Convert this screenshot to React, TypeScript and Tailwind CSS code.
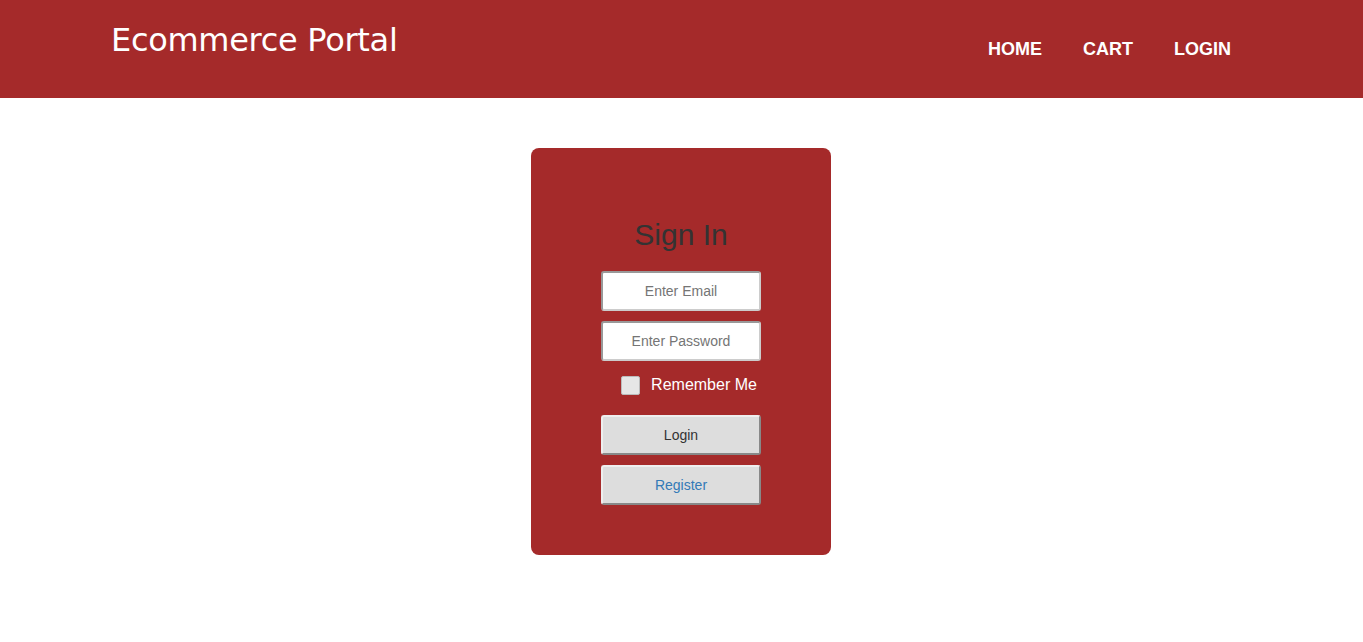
import React from "react";

export default function App() {
  return (
    <div className="min-h-[642px] bg-white" style={{ fontFamily: '"Liberation Sans", Arial, sans-serif' }}>
      <header className="h-[98px] bg-[#a52a2a] flex items-start justify-between pl-[111px] pr-[132px]">
        <h1 className="mt-[18px] text-[32px] leading-[44px] text-white font-normal tracking-[-0.3px]" style={{ fontFamily: '"DejaVu Sans", Tahoma, sans-serif' }}>
          Ecommerce Portal
        </h1>
        <nav className="mt-[39px] flex gap-[41px] text-white font-bold text-[18px] leading-[20px]">
          <span>HOME</span>
          <span>CART</span>
          <span>LOGIN</span>
        </nav>
      </header>
      <div className="flex justify-center pt-[50px] pr-[1px]">
        <div className="w-[300px] h-[407px] bg-[#a52a2a] rounded-[8px] flex flex-col items-center pt-[69px]">
          <h2 className="text-[30px] leading-[36px] text-[#333] mb-[18px]">Sign In</h2>
          <input
            className="w-[160px] h-[40px] bg-white border-2 border-[#999] border-b-[#ccc] border-r-[#ccc] rounded-[3px] text-center text-[14px] placeholder:text-[#757575] outline-none"
            placeholder="Enter Email"
          />
          <input
            className="mt-[10px] w-[160px] h-[40px] bg-white border-2 border-[#999] border-b-[#ccc] border-r-[#ccc] rounded-[3px] text-center text-[14px] placeholder:text-[#757575] outline-none"
            placeholder="Enter Password"
            type="password"
          />
          <label className="mt-[14px] flex items-center gap-[11px] text-white text-[16px] leading-[20px] ml-[16px]">
            <span className="w-[19px] h-[19px] bg-[#e6e6e6] border border-[#bbb] rounded-[2px] inline-block" />
            <span>Remember Me</span>
          </label>
          <button className="mt-[20px] w-[160px] h-[40px] bg-[#dddddd] border-2 border-[#eee] border-b-[#888] border-r-[#888] rounded-[3px] text-[14px] text-[#333]">
            Login
          </button>
          <button className="mt-[10px] w-[160px] h-[40px] bg-[#dddddd] border-2 border-[#eee] border-b-[#888] border-r-[#888] rounded-[3px] text-[14px] text-[#337ab7]">
            Register
          </button>
        </div>
      </div>
    </div>
  );
}
